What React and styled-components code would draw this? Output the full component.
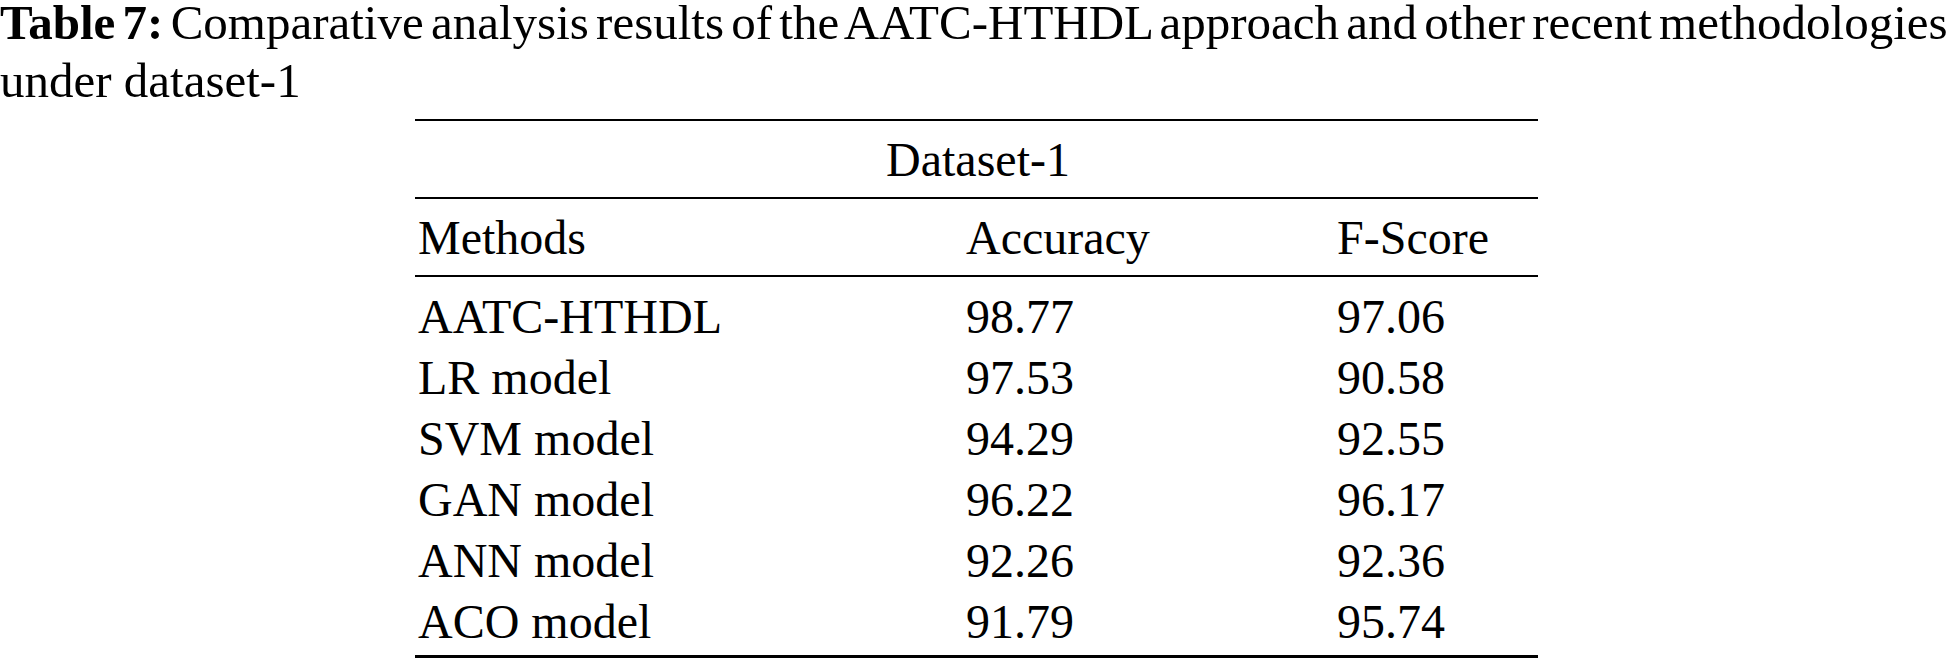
import React from "react";
import styled, { createGlobalStyle } from "styled-components";

const GlobalStyle = createGlobalStyle`
  html, body {
    margin: 0;
    padding: 0;
    background: #fff;
  }
  body {
    font-family: "Liberation Serif", "Times New Roman", serif;
    color: #000;
  }
`;

const Page = styled.div`
  width: 1954px;
  height: 662px;
  overflow: hidden;
`;

const Caption = styled.div`
  display: flex;
  flex-direction: column;
  gap: 12px;
  font-size: 49px;
  line-height: 46px;
`;

const CaptionLine = styled.div`
  white-space: nowrap;
  word-spacing: ${(p) => (p.$tight ? "-5px" : "0")};
`;

const Label = styled.span`
  font-weight: bold;
`;

const Table = styled.table`
  margin: 15px 0 0 415px;
  width: 1123px;
  border-collapse: collapse;
  font-size: 48px;
  table-layout: fixed;
`;

const Col = styled.col`
  width: ${(p) => p.$w}px;
`;

const HeadRow = styled.tr`
  border-top: 2px solid #000;
  height: 78px;
`;

const Cell = styled.td`
  padding: 0 0 0 3px;
  text-align: ${(p) => (p.$center ? "center" : "left")};
  vertical-align: middle;
  white-space: nowrap;
`;

const BodyCell = styled(Cell)`
  line-height: 61px;
  padding-top: ${(p) => (p.$first ? 9 : 0)}px;
  padding-bottom: ${(p) => (p.$last ? 3 : 0)}px;
`;

const BodyRow = styled.tr`
  border-bottom: ${(p) => (p.$last ? "3px solid #000" : "none")};
`;

const HeadBody = styled.thead`
  border-bottom: 2px solid #000;
`;

const rows = [
  ["AATC-HTHDL", "98.77", "97.06"],
  ["LR model", "97.53", "90.58"],
  ["SVM model", "94.29", "92.55"],
  ["GAN model", "96.22", "96.17"],
  ["ANN model", "92.26", "92.36"],
  ["ACO model", "91.79", "95.74"],
];

export default function App() {
  return (
    <Page>
      <GlobalStyle />
      <Caption>
        <CaptionLine $tight>
          <Label>Table 7:</Label> Comparative analysis results of the AATC-HTHDL approach and other recent methodologies
        </CaptionLine>
        <CaptionLine>under dataset-1</CaptionLine>
      </Caption>
      <Table>
        <colgroup>
          <Col $w={548} />
          <Col $w={371} />
          <Col $w={204} />
        </colgroup>
        <HeadBody>
          <HeadRow>
            <Cell colSpan={3} $center>
              Dataset-1
            </Cell>
          </HeadRow>
          <HeadRow>
            <Cell>Methods</Cell>
            <Cell>Accuracy</Cell>
            <Cell>F-Score</Cell>
          </HeadRow>
        </HeadBody>
        <tbody>
          {rows.map((r, i) => (
            <BodyRow key={r[0]} $last={i === rows.length - 1}>
              {r.map((v, j) => (
                <BodyCell key={j} $first={i === 0} $last={i === rows.length - 1}>
                  {v}
                </BodyCell>
              ))}
            </BodyRow>
          ))}
        </tbody>
      </Table>
    </Page>
  );
}
